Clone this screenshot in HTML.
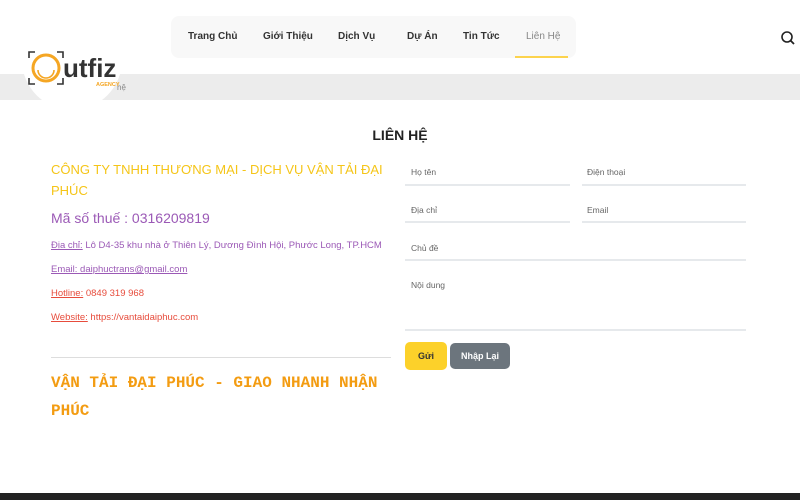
<!DOCTYPE html>
<html><head><meta charset="utf-8"><style>
*{margin:0;padding:0;box-sizing:border-box}
body{width:800px;height:500px;overflow:hidden;background:#fff;font-family:"Liberation Sans",sans-serif;position:relative}
.a{position:absolute}
.nav{left:171px;top:16px;width:405px;height:42px;background:#f8f8f8;border-radius:8px}
.nav span{position:absolute;top:15px;font-size:10px;color:#333;font-weight:bold}
.lbl{position:absolute;font-size:8.5px;color:#666}
.ln{position:absolute;height:2px;background:#e6e9ec}
.info{position:absolute;left:51px;font-size:9.5px;white-space:nowrap}
</style></head><body>
<div class="a" style="left:0;top:74px;width:800px;height:26px;background:#ececec"></div>
<div class="a" style="left:117px;top:83px;font-size:8px;color:#888">hệ</div>
<div class="a" style="left:22px;top:10px;width:100px;height:100px;border-radius:50%;background:#fff"></div>
<svg class="a" style="left:26px;top:49px" width="100" height="40" viewBox="0 0 100 40">
<path d="M3 9V3h6M31 3h6v6M3 29v6h6M31 35h6v-6" stroke="#333" stroke-width="1.6" fill="none"/>
<circle cx="20" cy="19" r="13" stroke="#f5a623" stroke-width="3" fill="none"/>
<path d="M12 21a8 8 0 0 0 16 0" stroke="#f5a623" stroke-width="1.6" fill="none"/>
<text x="37" y="28" font-family="Liberation Sans" font-weight="bold" font-size="26" fill="#333">utfiz</text>
<text x="70" y="37" font-family="Liberation Sans" font-weight="bold" font-size="5.5" fill="#f5a623">AGENCY</text>
</svg>
<div class="a nav">
<span style="left:17px">Trang Chủ</span>
<span style="left:92px">Giới Thiệu</span>
<span style="left:167px">Dịch Vụ</span>
<span style="left:236px">Dự Án</span>
<span style="left:292px">Tin Tức</span>
<span style="left:355px;color:#888;font-weight:normal">Liên Hệ</span>
</div>
<div class="a" style="left:515px;top:56px;width:53px;height:2px;background:#fcd34d"></div>
<svg class="a" style="left:780px;top:30px" width="16" height="16" viewBox="0 0 16 16"><circle cx="7" cy="7" r="5" stroke="#222" stroke-width="1.6" fill="none"/><path d="M10.5 10.5l3.5 3.5" stroke="#222" stroke-width="1.8"/></svg>
<div class="a" style="left:0;width:800px;top:127px;text-align:center;font-size:14px;font-weight:bold;color:#222">LIÊN HỆ</div>
<div class="a" style="left:51px;top:159px;width:360px;font-size:13px;line-height:21px;color:#f5c518;white-space:nowrap">CÔNG TY TNHH THƯƠNG MẠI - DỊCH VỤ VẬN TẢI ĐẠI<br>PHÚC</div>
<div class="a" style="left:51px;top:210px;font-size:14px;color:#9b59b6">Mã số thuế : 0316209819</div>
<div class="info" style="top:240px;color:#9b59b6"><u>Địa chỉ:</u> Lô D4-35 khu nhà ở Thiên Lý, Dương Đình Hội, Phước Long, TP.HCM</div>
<div class="info" style="top:264px;color:#9b59b6"><u>Email: daiphuctrans@gmail.com</u></div>
<div class="info" style="top:288px;color:#e74c3c"><u>Hotline:</u> 0849 319 968</div>
<div class="info" style="top:312px;color:#e74c3c"><u>Website:</u> https://vantaidaiphuc.com</div>
<div class="a" style="left:51px;top:357px;width:340px;height:1px;background:#ddd"></div>
<div class="a" style="left:51px;top:369px;width:345px;font-family:'Liberation Mono',monospace;font-weight:bold;font-size:16px;line-height:28px;color:#f39c12">VẬN TẢI ĐẠI PHÚC - GIAO NHANH NHẬN PHÚC</div>
<div class="lbl" style="left:411px;top:167px">Họ tên</div>
<div class="lbl" style="left:587px;top:167px">Điện thoại</div>
<div class="ln" style="left:405px;top:184px;width:165px"></div>
<div class="ln" style="left:582px;top:184px;width:164px"></div>
<div class="lbl" style="left:411px;top:205px">Địa chỉ</div>
<div class="lbl" style="left:587px;top:205px">Email</div>
<div class="ln" style="left:405px;top:221px;width:165px"></div>
<div class="ln" style="left:582px;top:221px;width:164px"></div>
<div class="lbl" style="left:411px;top:243px">Chủ đề</div>
<div class="ln" style="left:405px;top:259px;width:341px"></div>
<div class="lbl" style="left:411px;top:280px">Nội dung</div>
<div class="ln" style="left:405px;top:329px;width:341px"></div>
<div class="a" style="left:405px;top:342px;width:42px;height:28px;background:#fcd12a;border-radius:5px;font-size:9px;font-weight:bold;color:#333;text-align:center;line-height:28px">Gửi</div>
<div class="a" style="left:450px;top:343px;width:60px;height:26px;background:#6c757d;border-radius:5px;font-size:9px;font-weight:bold;color:#fff;text-align:center;line-height:26px">Nhập Lại</div>
<div class="a" style="left:0;top:493px;width:800px;height:7px;background:#222"></div>
</body></html>
